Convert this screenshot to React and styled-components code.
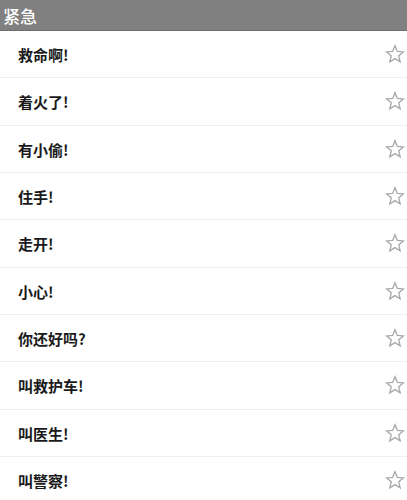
import React from "react";
import styled, { createGlobalStyle } from "styled-components";

const Global = createGlobalStyle`
  html, body { margin: 0; padding: 0; background: #fff; }
  body { font-family: "Noto Sans CJK SC", "Noto Sans", sans-serif; }
`;

const Page = styled.div`
  width: 407px;
  height: 500px;
  overflow: hidden;
  display: flex;
  flex-direction: column;
  background: #fff;
`;

const Header = styled.div`
  height: 31px;
  flex: none;
  background: #808080;
  border-bottom: 1px solid #6e6e6e;
  box-sizing: border-box;
  display: flex;
  align-items: center;
  padding-left: 3px;
  color: #fff;
  font-size: 17px;
  font-weight: 500;
`;

const List = styled.div`
  display: flex;
  flex-direction: column;
`;

const Row = styled.div`
  height: 47.33px;
  flex: none;
  box-sizing: border-box;
  border-bottom: 1.5px solid #f0f0f4;
  display: flex;
  align-items: center;
  justify-content: space-between;
  padding: 0 2px 0 18px;
`;

const Label = styled.span`
  font-size: 15px;
  font-weight: 700;
  color: #1a1a1a;
  padding-top: 1px;
`;

const StarIcon = () => (
  <svg width="20" height="20" viewBox="0 0 24 24" fill="none" stroke="#a8a8a8" strokeWidth="1.6" strokeLinejoin="miter">
    <polygon points="12,2.2 14.8,8.9 22,9.5 16.5,14.2 18.2,21.3 12,17.5 5.8,21.3 7.5,14.2 2,9.5 9.2,8.9" />
  </svg>
);

const items = ["救命啊!", "着火了!", "有小偷!", "住手!", "走开!", "小心!", "你还好吗?", "叫救护车!", "叫医生!", "叫警察!"];

export default function App() {
  return (
    <Page>
      <Global />
      <Header>紧急</Header>
      <List>
        {items.map((t) => (
          <Row key={t}>
            <Label>{t}</Label>
            <StarIcon />
          </Row>
        ))}
      </List>
    </Page>
  );
}
